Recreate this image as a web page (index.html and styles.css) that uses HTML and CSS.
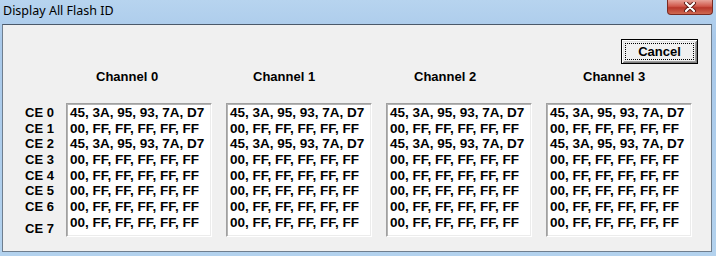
FILE: index.html
```html
<!DOCTYPE html>
<html lang="en">
<head>
    <meta charset="UTF-8">
    <title>Display All Flash ID</title>
    <link rel="stylesheet" href="styles.css">
</head>
<body>
    <div class="window">
        <div class="titlebar">
            <span class="title">Display All Flash ID</span>
            <div class="close">
                <svg width="14" height="10" viewBox="0 0 14 10">
                    <path d="M3 1 L11 9 M11 1 L3 9" stroke="#5a1a14" stroke-width="4" stroke-linecap="round"/>
                    <path d="M3 1 L11 9 M11 1 L3 9" stroke="#fff" stroke-width="2.2" stroke-linecap="round"/>
                </svg>
            </div>
        </div>
        <div class="client">
            <div class="actions">
                <button class="btn" type="button"><span class="focus">Cancel</span></button>
            </div>
            <div class="grid">
                <div></div>
                <div class="channel ch0">Channel 0</div>
                <div class="channel ch1">Channel 1</div>
                <div class="channel ch2">Channel 2</div>
                <div class="channel ch3">Channel 3</div>

                <div class="labels">
                    <div>CE 0</div>
                    <div>CE 1</div>
                    <div>CE 2</div>
                    <div>CE 3</div>
                    <div>CE 4</div>
                    <div>CE 5</div>
                    <div>CE 6</div>
                    <div class="last">CE 7</div>
                </div>
                <div class="box" id="box0"></div>
                <div class="box" id="box1"></div>
                <div class="box" id="box2"></div>
                <div class="box" id="box3"></div>
            </div>
        </div>
    </div>
    <script>
        const ids = ["45, 3A, 95, 93, 7A, D7", "00, FF, FF, FF, FF, FF"];
        const rows = [0, 1, 0, 1, 1, 1, 1, 1];

        for (let c = 0; c < 4; c++) {
            const box = document.getElementById("box" + c);
            rows.forEach(function(r) {
                const line = document.createElement("div");
                line.textContent = ids[r];
                box.appendChild(line);
            });
        }
    </script>
</body>
</html>
```

FILE: styles.css
```css
* {
    margin: 0;
    padding: 0;
    box-sizing: border-box;
}

body {
    width: 716px;
    height: 256px;
    overflow: hidden;
    font-family: "Liberation Sans", Arial, sans-serif;
    background-color: #b1d0ed;
}

.window {
    width: 716px;
    height: 256px;
    background: linear-gradient(#b7d4ef, #a9c9ea 40px, #b3d2ee);
}

.titlebar {
    height: 24px;
    display: flex;
    align-items: flex-start;
}

.title {
    font-family: "Noto Sans", sans-serif;
    font-size: 12.5px;
    color: #000;
    padding: 2px 0 0 3px;
    line-height: 17px;
}

.close {
    margin-left: auto;
    margin-right: 3px;
    width: 46px;
    height: 15px;
    border: 1px solid #7a2b22;
    border-top: none;
    border-radius: 0 0 4px 4px;
    background: linear-gradient(#e8a49a, #d0584b 45%, #b8372b 55%, #cf6a52);
    display: flex;
    align-items: center;
    justify-content: center;
}

.client {
    margin: 0 4px 0 2px;
    height: 228px;
    background-color: #f0f0f0;
    border: 1px solid #6f7e8e;
    border-top-color: #4b596a;
}

.actions {
    display: flex;
    justify-content: flex-end;
    padding: 14px 13px 0 0;
}

.btn {
    width: 77px;
    height: 25px;
    font-family: "Liberation Sans", Arial, sans-serif;
    font-weight: bold;
    font-size: 13px;
    color: #000;
    background-color: #f0f0f0;
    border: 1px solid #000;
    box-shadow: inset 1px 1px 0 #fff, inset -1px -1px 0 #808080, inset 2px 2px 0 #e3e3e3, inset -2px -2px 0 #a0a0a0;
    padding: 3px;
}

.focus {
    display: block;
    height: 100%;
    border: 1px dotted #000;
    line-height: 15px;
}

.grid {
    display: grid;
    grid-template-columns: 49px repeat(4, 146px);
    column-gap: 14px;
    row-gap: 19px;
    margin-top: 5px;
}

.channel {
    font-weight: bold;
    font-size: 13px;
    line-height: 15px;
    color: #000;
}

.ch0 { padding-left: 30px; }
.ch1 { padding-left: 27px; }
.ch2 { padding-left: 28px; }
.ch3 { padding-left: 37px; }

.labels {
    padding-left: 22px;
    padding-top: 2px;
    font-weight: bold;
    font-size: 13px;
    line-height: 15.67px;
    color: #000;
    white-space: nowrap;
}

.labels .last {
    margin-top: 6px;
}

.box {
    height: 134px;
    background-color: #fff;
    border: 1px solid;
    border-color: #a0a0a0 #fff #fff #a0a0a0;
    box-shadow: inset 1px 1px 0 #b4b4b4, inset -1px -1px 0 #ececec;
    padding: 1px 0 0 3px;
    font-weight: bold;
    font-size: 13.5px;
    line-height: 15.67px;
    color: #000;
    white-space: nowrap;
}
```
